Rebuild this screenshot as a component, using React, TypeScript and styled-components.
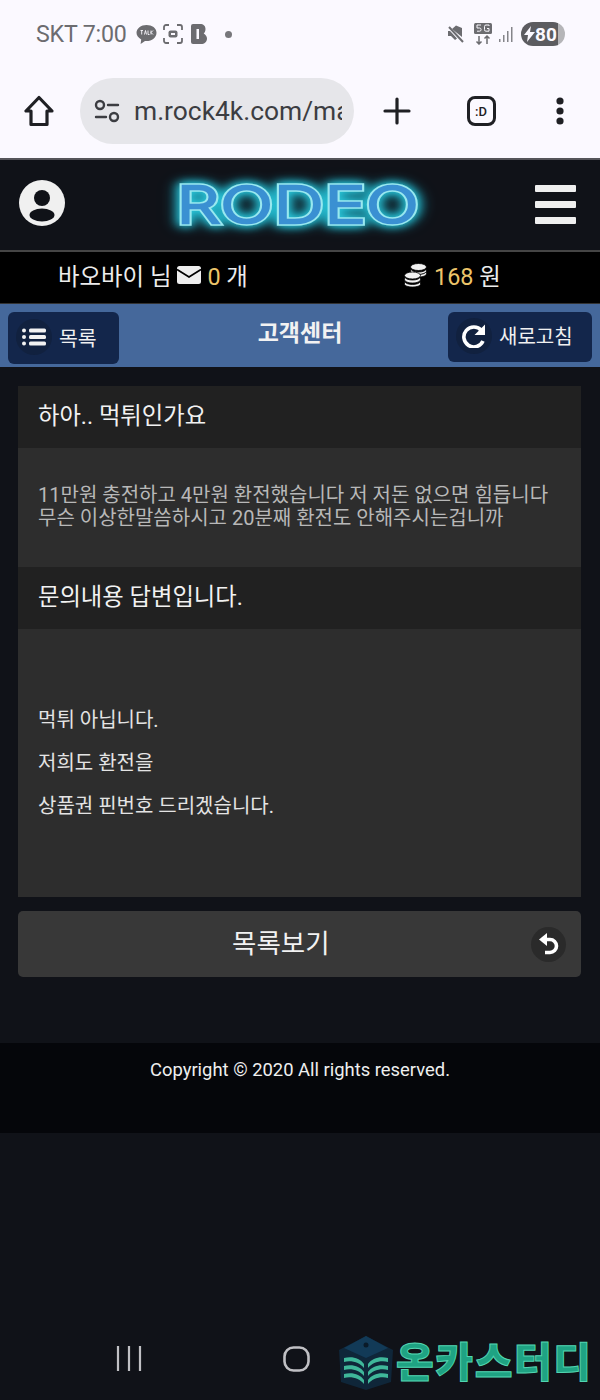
import React from 'react'
import styled, { createGlobalStyle } from 'styled-components'

const GlobalStyle = createGlobalStyle`
  html, body {
    margin: 0;
    padding: 0;
    background: #101218;
  }
  * {
    box-sizing: border-box;
  }
`

const sans = `Roboto, "Noto Sans CJK KR", sans-serif`

const Page = styled.div`
  width: 600px;
  height: 1400px;
  display: flex;
  flex-direction: column;
  overflow: hidden;
  position: relative;
  background: #101218;
  font-family: ${sans};
  color: #f0f0f0;
`

const Chrome = styled.div`
  height: 160px;
  background: #fbf9ff;
  border-bottom: 2px solid #55555a;
  display: flex;
  flex-direction: column;
`

const StatusBar = styled.div`
  height: 68px;
  padding: 20px 35px 0 36px;
  display: flex;
  align-items: flex-start;
  justify-content: space-between;
`

const StatusGroup = styled.div`
  display: flex;
  align-items: center;
  height: 28px;
  color: #6c6c70;
`

const Spacer = styled.span<{ $w: number }>`
  width: ${p => p.$w}px;
  flex: none;
`

const Clock = styled.span`
  font-size: 23.2px;
  letter-spacing: -0.2px;
  margin-right: 9px;
`

const Battery = styled.span`
  width: 44px;
  height: 24px;
  border-radius: 12px;
  background: linear-gradient(90deg, #5c5c60 0 84%, #b5b5b8 84%);
  color: #fbf9ff;
  font-size: 19px;
  font-weight: 700;
  display: flex;
  align-items: center;
  padding-left: 3px;
`

const BrowserBar = styled.div`
  height: 66px;
  margin-top: 10px;
  padding: 0 35px 0 24px;
  display: flex;
  align-items: center;
`

const UrlPill = styled.div`
  width: 274px;
  height: 66px;
  margin-left: 26px;
  margin-right: 29px;
  border-radius: 33px;
  background: #e6e6ea;
  padding: 0 0 0 14px;
  display: flex;
  align-items: center;
  gap: 14px;
  color: #3c3d42;
`

const UrlText = styled.span`
  width: 208px;
  overflow: hidden;
  white-space: nowrap;
  font-size: 26.4px;
`

const BrowserActions = styled.div`
  flex: 1;
  display: flex;
  align-items: center;
  justify-content: space-between;
`

const TabBadge = styled.span`
  width: 29px;
  height: 30px;
  margin-right: 4px;
  border: 3px solid #1f2024;
  border-radius: 8px;
  color: #1f2024;
  font-size: 13px;
  font-weight: 500;
  display: flex;
  align-items: center;
  justify-content: center;
`

const Header = styled.header`
  height: 90px;
  padding: 0 24px 0 19px;
  display: flex;
  align-items: flex-start;
  justify-content: space-between;
`

const ProfileSlot = styled.div`
  margin-top: 20px;
  height: 46px;
`

const Logo = styled.div`
  position: relative;
  margin: 15px 0 0 -3px;
  height: 60px;
  line-height: 60px;
  font-family: Inter, sans-serif;
  font-size: 48px;
  font-weight: 100;
  letter-spacing: 2px;
  color: #98e8ef;
  -webkit-text-stroke: 7.5px #98e8ef;
  filter: drop-shadow(0 0 4px #2fd0e2) drop-shadow(0 0 5px #169fb8);
  transform: scaleX(1.4);

  &::after {
    content: 'RODEO';
    position: absolute;
    left: 0;
    top: 0;
    color: #3a90d2;
    -webkit-text-stroke: 4.5px #3a90d2;
  }
`

const MenuBars = styled.div`
  margin-top: 25px;
  width: 41px;
  display: flex;
  flex-direction: column;
  gap: 9px;
`

const MenuBar = styled.span`
  height: 7px;
  border-radius: 1px;
  background: #efefef;
`

const InfoBar = styled.div`
  height: 54px;
  background: #000;
  border-top: 2px solid #454545;
  border-bottom: 1px solid #333;
  padding-bottom: 5px;
  display: grid;
  grid-template-columns: 300px 300px;
  font-size: 23.4px;
`

const InfoCell = styled.div<{ $pad: number }>`
  display: flex;
  align-items: center;
  padding-left: ${p => p.$pad}px;
  gap: 6px;
  color: #ececec;
`

const Gold = styled.span`
  color: #ecc56a;
`

const TitleBar = styled.div`
  height: 63px;
  background: #45689b;
  padding: 8px 8px 0;
  display: flex;
  justify-content: space-between;
  align-items: flex-start;
  position: relative;
`

const BarTitle = styled.h1`
  position: absolute;
  left: 0;
  right: 0;
  top: 14px;
  margin: 0;
  text-align: center;
  font-size: 23px;
  line-height: 32px;
  font-weight: 700;
  color: #f2f2f2;
`

const BarButton = styled.div<{ $w: number; $h: number; $font: number }>`
  width: ${p => p.$w}px;
  height: ${p => p.$h}px;
  background: #13264b;
  border-radius: 6px;
  display: flex;
  align-items: center;
  gap: 7px;
  padding: 0 0 3px 8px;
  font-size: ${p => p.$font}px;
  color: #f0f0f0;
`

const IconDisc = styled.span<{ $bg: string; $size: number }>`
  width: ${p => p.$size}px;
  height: ${p => p.$size}px;
  border-radius: 50%;
  background: ${p => p.$bg};
  display: flex;
  align-items: center;
  justify-content: center;
  flex: none;
`

const Main = styled.main`
  padding: 19px 19px 0 18px;
  display: flex;
  flex-direction: column;
`

const Heading = styled.div`
  height: 62px;
  background: #212121;
  padding: 0 20px 7px;
  display: flex;
  align-items: center;
  font-size: 23.3px;
  color: #f2f2f2;
`

const Question = styled.div`
  height: 119px;
  background: #2d2d2d;
  padding: 36px 20px 0;
  font-size: 20px;
  line-height: 23px;
  color: #b8b8b8;
`

const Answer = styled.div`
  height: 268px;
  background: #2d2d2d;
  padding: 77px 20px 0;
  font-size: 20px;
  color: #e4e4e4;
`

const AnswerLine = styled.p`
  margin: 0 0 15px;
  line-height: 28px;
`

const BackButton = styled.div`
  margin-top: 14px;
  height: 66px;
  background: #383838;
  border-radius: 5px;
  padding-right: 15px;
  display: flex;
  align-items: center;
  justify-content: flex-end;
  position: relative;
  font-size: 26.5px;
  color: #f2f2f2;
`

const BackLabel = styled.span`
  position: absolute;
  left: 214px;
  top: 15px;
  line-height: 36px;
`

const Footer = styled.footer`
  margin-top: 66px;
  height: 90px;
  background: #05060a;
  padding-top: 15px;
  text-align: center;
  font-size: 18.4px;
  line-height: 24px;
  color: #efefef;
`

const NavBar = styled.div`
  margin-top: auto;
  height: 80px;
  padding: 0 0 28px 116px;
  display: flex;
  align-items: flex-end;
  gap: 141px;
`

const Watermark = styled.div`
  position: absolute;
  left: 338px;
  bottom: 10px;
  display: flex;
  align-items: center;
`

const WatermarkText = styled.span`
  margin-left: 2px;
  font-size: 41px;
  line-height: 50px;
  font-weight: 900;
  letter-spacing: 1.6px;
  color: #1fa383;
  -webkit-text-stroke: 1px #52d4b0;
`

const StatusDot = styled.span`
  width: 7px;
  height: 7px;
  border-radius: 50%;
  background: #77777b;
  margin-left: 18px;
`

const HomeIcon = () => (
  <svg width="30" height="32" viewBox="0 0 30 32" fill="none" stroke="#1f2024" strokeWidth="3.2" strokeLinejoin="round">
    <path d="M15 2.5 2 16h5v13.5h16V16h5z" />
  </svg>
)

const TuneIcon = () => (
  <svg width="26" height="24" viewBox="0 0 26 24" fill="none" stroke="#3c3d42" strokeWidth="2.4" strokeLinecap="round">
    <circle cx="6" cy="6" r="4" />
    <path d="M14 6h10M2 18h10" />
    <circle cx="20" cy="18" r="4" />
  </svg>
)

const PlusIcon = () => (
  <svg width="28" height="28" viewBox="0 0 28 28" stroke="#1f2024" strokeWidth="3.2" strokeLinecap="round">
    <path d="M14 2v24M2 14h24" />
  </svg>
)

const DotsIcon = () => (
  <svg width="10" height="30" viewBox="0 0 10 30" fill="#1f2024">
    <circle cx="5" cy="5" r="3.6" />
    <circle cx="5" cy="15" r="3.6" />
    <circle cx="5" cy="25" r="3.6" />
  </svg>
)

const TalkIcon = () => (
  <svg width="21" height="21" viewBox="0 0 21 21">
    <path d="M10.5 1C5 1 .5 4.4.5 8.8c0 2.8 1.9 5.2 4.7 6.6L4.6 20l4.4-3c.5 0 1 .1 1.5.1 5.5 0 10-3.5 10-8.3S16 1 10.5 1z" fill="#6c6c70" />
    <path d="M4.5 6.5H7M5.700 6.5v4M8.500 10.500l1-4 1 4M12 6.500v4h1.500M15 6.500v4M17 6.500l-2 2 2 2" stroke="#fbf9ff" strokeWidth="0.9" fill="none" />
  </svg>
)

const CaptureIcon = () => (
  <svg width="20" height="20" viewBox="0 0 20 20" fill="none" stroke="#6c6c70" strokeWidth="1.8">
    <path d="M1 6V3a2 2 0 0 1 2-2h3M14 1h3a2 2 0 0 1 2 2v3M19 14v3a2 2 0 0 1-2 2h-3M6 19H3a2 2 0 0 1-2-2v-3" />
    <rect x="5.500" y="6.500" width="9" height="7" rx="2" fill="#6c6c70" stroke="none" />
    <rect x="8" y="9" width="4" height="2" fill="#fbf9ff" stroke="none" />
  </svg>
)

const BandIcon = () => (
  <svg width="16" height="20" viewBox="0 0 16 20">
    <path d="M0 2a2 2 0 0 1 2-2h7c3.500 0 5.500 2 5.500 5 0 2-.8 3.500-1.800 4.500C14.600 10.800 16 12.300 16 14.500c0 3.500-2.500 5.500-6 5.500H2a2 2 0 0 1-2-2z" fill="#6c6c70" />
    <rect x="5.500" y="5" width="2.500" height="10" fill="#fbf9ff" />
  </svg>
)

const MuteIcon = () => (
  <svg width="18" height="18" viewBox="0 0 18 18" fill="#6c6c70">
    <path d="M1 6v5h3l4 4 2-1.500L4 7 3 6zM5 4l4-3.500 6 2.500v9z" />
    <path d="M2 2l14 15" stroke="#6c6c70" strokeWidth="2" />
  </svg>
)

const FiveGIcon = () => (
  <svg width="18" height="22" viewBox="0 0 18 22">
    <rect x="0" y="0" width="18" height="11" rx="1.500" fill="#6c6c70" />
    <path d="M7 2H3v3h2.500a1.500 1.500 0 0 1 0 3.200H3M15 3V2h-3a1.500 1.500 0 0 0-1.500 1.500v3A1.500 1.500 0 0 0 12 8.200h3V5.500h-2" stroke="#fbf9ff" strokeWidth="1" fill="none" />
    <path d="M5 13v8M2.500 18.500 5 21l2.500-2.500M13 21v-8M10.500 15.500 13 13l2.500 2.500" stroke="#6c6c70" strokeWidth="1.500" fill="none" />
  </svg>
)

const SignalIcon = () => (
  <svg width="15" height="16" viewBox="0 0 15 16" fill="#85858a">
    <rect x="0" y="13" width="1.500" height="3" />
    <rect x="4" y="9" width="1.500" height="7" />
    <rect x="8" y="5" width="1.500" height="11" />
    <rect x="12" y="1" width="1.500" height="15" />
  </svg>
)

const BoltIcon = () => (
  <svg width="11" height="16" viewBox="0 0 11 16" fill="#fbf9ff">
    <path d="M7 0 0 9h4l-1 7 8-10H6z" />
  </svg>
)

const ProfileIcon = () => (
  <svg width="46" height="46" viewBox="0 0 46 46">
    <ellipse cx="23" cy="23" rx="23" ry="23" fill="#f0f0f0" />
    <circle cx="23" cy="18" r="8" fill="#101218" />
    <ellipse cx="23" cy="35" rx="12.500" ry="6.500" fill="#101218" />
  </svg>
)

const EnvelopeIcon = () => (
  <svg width="24" height="18" viewBox="0 0 24 18">
    <rect width="24" height="18" rx="2.500" fill="#eeeeee" />
    <path d="M0 3.500 12 11 24 3.500" fill="none" stroke="#000" strokeWidth="1.800" />
  </svg>
)

const CoinsIcon = () => (
  <svg width="25" height="24" viewBox="0 0 24 24" fill="#f2f2f2" stroke="#000" strokeWidth="0.8">
    <ellipse cx="15" cy="4" rx="8" ry="3.500" />
    <path d="M7 6v2c0 2 3.500 3.500 8 3.500s8-1.500 8-3.500V6c-1 1.800-4 3-8 3s-7-1.200-8-3z" />
    <path d="M15 11.500v2.500c4 0 8-1 8-3.500v-2c-1 1.800-4 3-8 3z" />
    <ellipse cx="9" cy="12.500" rx="8" ry="3.500" />
    <path d="M1 14v2.500C1 18.500 4.500 20 9 20s8-1.500 8-3.500V14c-1 1.800-4 3-8 3s-7-1.200-8-3z" />
    <path d="M1 18.500V21c0 1.800 3.500 3 8 3s8-1.200 8-3v-2.500c-1 1.800-4 3-8 3s-7-1.200-8-3z" />
  </svg>
)

const ListIcon = () => (
  <svg width="24" height="18" viewBox="0 0 24 18" fill="#f2f2f2">
    <circle cx="2" cy="2.500" r="2" />
    <circle cx="2" cy="9" r="2" />
    <circle cx="2" cy="15.500" r="2" />
    <rect x="7" y="0.500" width="17" height="4" rx="1.500" />
    <rect x="7" y="7" width="17" height="4" rx="1.500" />
    <rect x="7" y="13.500" width="17" height="4" rx="1.500" />
  </svg>
)

const RefreshIcon = () => (
  <svg width="24" height="24" viewBox="0 0 24 24" fill="none">
    <path d="M19.500 6.500A10 10 0 1 0 21 17" stroke="#fff" strokeWidth="3.600" />
    <path d="M23 0.500V11H12.500z" fill="#fff" />
  </svg>
)

const UndoIcon = () => (
  <svg width="20" height="22" viewBox="0 0 20 22" fill="none">
    <path d="M0 6.500 8 0v13z" fill="#fff" />
    <path d="M7 6.500h4a6.500 6.500 0 0 1 0 13H6" stroke="#fff" strokeWidth="3.600" />
  </svg>
)

const NavRecents = () => (
  <svg width="26" height="26" viewBox="0 0 26 26" stroke="#c0c0c4" strokeWidth="2.200">
    <path d="M2 0v25M13 0v25M24 0v25" />
  </svg>
)

const NavHome = () => (
  <svg width="27" height="26" viewBox="0 0 27 26" fill="none" stroke="#c0c0c4" strokeWidth="2.600">
    <rect x="1.500" y="1.500" width="24" height="23" rx="9" />
  </svg>
)

const BookCapIcon = () => (
  <svg width="56" height="54" viewBox="0 0 56 54">
    <path d="M1 14 3 46 28 54 53 46 55 14 28 0z" fill="#0f2c42" opacity="0.8" />
    <path d="M28 0 50 12 28 22 6 12z" fill="#123a57" />
    <circle cx="28" cy="9" r="2.500" fill="#0a1a28" />
    <path d="M6 22c8-2 16 0 20 6v4c-4-5-12-8-20-6zM50 22c-8-2-16 0-20 6v4c4-5 12-8 20-6zM6 30c8-2 16 0 20 6v4c-4-5-12-8-20-6zM50 30c-8-2-16 0-20 6v4c4-5 12-8 20-6zM6 38c8-2 16 0 20 6v4c-4-5-12-8-20-6zM50 38c-8-2-16 0-20 6v4c4-5 12-8 20-6z" fill="#3fb79a" />
  </svg>
)

const App = () => (
  <Page>
    <GlobalStyle />
    <Chrome>
      <StatusBar>
        <StatusGroup>
          <Clock>SKT 7:00</Clock>
          <TalkIcon />
          <Spacer $w={6} />
          <CaptureIcon />
          <Spacer $w={8} />
          <BandIcon />
          <StatusDot />
        </StatusGroup>
        <StatusGroup>
          <MuteIcon />
          <Spacer $w={9} />
          <FiveGIcon />
          <Spacer $w={7} />
          <SignalIcon />
          <Spacer $w={7} />
          <Battery>
            <BoltIcon />
            80
          </Battery>
        </StatusGroup>
      </StatusBar>
      <BrowserBar>
        <HomeIcon />
        <UrlPill>
          <TuneIcon />
          <UrlText>m.rock4k.com/ma</UrlText>
        </UrlPill>
        <BrowserActions>
          <PlusIcon />
          <TabBadge>:D</TabBadge>
          <DotsIcon />
        </BrowserActions>
      </BrowserBar>
    </Chrome>
    <Header>
      <ProfileSlot>
        <ProfileIcon />
      </ProfileSlot>
      <Logo>RODEO</Logo>
      <MenuBars>
        <MenuBar />
        <MenuBar />
        <MenuBar />
      </MenuBars>
    </Header>
    <InfoBar>
      <InfoCell $pad={58}>
        바오바이 님
        <EnvelopeIcon />
        <span>
          <Gold>0</Gold> 개
        </span>
      </InfoCell>
      <InfoCell $pad={103}>
        <CoinsIcon />
        <span>
          <Gold>168</Gold> 원
        </span>
      </InfoCell>
    </InfoBar>
    <TitleBar>
      <BarButton $w={111} $h={52} $font={20.5}>
        <IconDisc $bg="#11213f" $size={36}>
          <ListIcon />
        </IconDisc>
        <span>목록</span>
      </BarButton>
      <BarTitle>고객센터</BarTitle>
      <BarButton $w={144} $h={50} $font={20}>
        <IconDisc $bg="#11213f" $size={36}>
          <RefreshIcon />
        </IconDisc>
        <span>새로고침</span>
      </BarButton>
    </TitleBar>
    <Main>
      <Heading>하아.. 먹튀인가요</Heading>
      <Question>
        11만원 충전하고 4만원 환전했습니다 저 저돈 없으면 힘듭니다
        <br />
        무슨 이상한말씀하시고 20분째 환전도 안해주시는겁니까
      </Question>
      <Heading>문의내용 답변입니다.</Heading>
      <Answer>
        <AnswerLine>먹튀 아닙니다.</AnswerLine>
        <AnswerLine>저희도 환전을</AnswerLine>
        <AnswerLine>상품권 핀번호 드리겠습니다.</AnswerLine>
      </Answer>
      <BackButton>
        <BackLabel>목록보기</BackLabel>
        <IconDisc $bg="#2a2a2a" $size={35}>
          <UndoIcon />
        </IconDisc>
      </BackButton>
    </Main>
    <Footer>Copyright © 2020 All rights reserved.</Footer>
    <NavBar>
      <NavRecents />
      <NavHome />
    </NavBar>
    <Watermark>
      <BookCapIcon />
      <WatermarkText>온카스터디</WatermarkText>
    </Watermark>
  </Page>
)

export default App
